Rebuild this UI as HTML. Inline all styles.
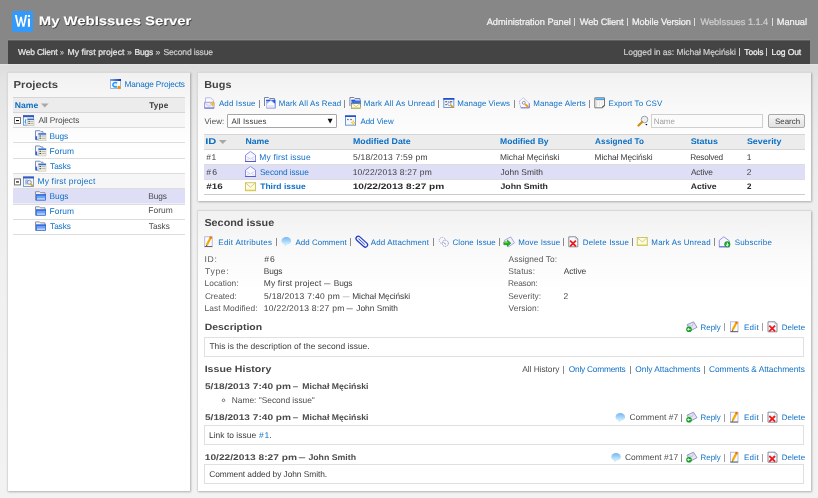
<!DOCTYPE html>
<html><head><meta charset="utf-8"><title>WebIssues</title>
<style>
html,body{margin:0;padding:0;width:818px;height:498px;overflow:hidden;background:#f0f0f0;font-family:"Liberation Sans",sans-serif}
svg text{font-family:"Liberation Sans",sans-serif;white-space:pre;text-rendering:geometricPrecision}
</style></head><body>
<div style="position:absolute;left:0;top:0;width:818px;height:64px;background:#878787"></div><div style="position:absolute;left:8px;top:40px;width:802px;height:24px;background:#444444;border-top:1px solid #606060;box-sizing:border-box;box-shadow:0 -1px 0 #8e8e8e"></div><div style="position:absolute;left:0;top:64px;width:818px;height:434px;background:linear-gradient(#e6e6e6 0px,#dedede 2px,#e4e4e4 20px,#ebebeb 80px,#f0f0f0 200px,#f2f2f2 400px)"></div><div style="position:absolute;left:7px;top:72px;width:183px;height:419px;background:linear-gradient(#f1f1f1 0px,#fafafa 40px,#ffffff 80px);box-shadow:1px 1px 2px rgba(0,0,0,0.28);border:1px solid #d9d9d9;border-right:none;border-bottom:none;box-sizing:border-box"></div><div style="position:absolute;left:197px;top:72px;width:614px;height:129px;background:linear-gradient(#f1f1f1 0px,#fafafa 40px,#ffffff 80px);box-shadow:1px 1px 2px rgba(0,0,0,0.28);border:1px solid #d9d9d9;border-right:none;border-bottom:none;box-sizing:border-box"></div><div style="position:absolute;left:197px;top:210px;width:614px;height:281px;background:linear-gradient(#f1f1f1 0px,#fafafa 40px,#ffffff 80px);box-shadow:1px 1px 2px rgba(0,0,0,0.28);border:1px solid #d9d9d9;border-right:none;border-bottom:none;box-sizing:border-box"></div><div style="position:absolute;left:12px;top:11px;width:21px;height:21px;background:#3399fa;border-radius:2px"></div><div style="position:absolute;left:227px;top:114px;width:110px;height:14px;background:#fff;border:1px solid #a6a6a6;border-radius:1px;box-sizing:border-box"></div><div style="position:absolute;left:651px;top:114px;width:112px;height:14px;background:#fbfbfb;border:1px solid #cfcfcf;box-sizing:border-box"></div><div style="position:absolute;left:768px;top:114px;width:37px;height:14px;background:linear-gradient(#f6f6f6,#e2e2e2);border:1px solid #a9a9a9;border-radius:2px;box-sizing:border-box"></div><div style="position:absolute;left:204px;top:337px;width:600px;height:20px;background:#fff;border:1px solid #e0e0e0;box-sizing:border-box"></div><div style="position:absolute;left:204px;top:425px;width:600px;height:20px;background:#fff;border:1px solid #e0e0e0;box-sizing:border-box"></div><div style="position:absolute;left:204px;top:464px;width:600px;height:20px;background:#fff;border:1px solid #e0e0e0;box-sizing:border-box"></div>
<svg width="818" height="498" viewBox="0 0 818 498" style="position:absolute;left:0;top:0;will-change:transform">
<defs><filter id="tsh" x="-5%" y="-30%" width="110%" height="160%"><feDropShadow dx="0.8" dy="0.8" stdDeviation="0.4" flood-color="#000" flood-opacity="0.6"/></filter></defs>
<path d="M14.8,15 L16.8,15 L18.6,24.2 L20.2,16.8 L21.8,16.8 L23.4,24.2 L25.1,15 L27.1,15 L24.4,26.8 L22.5,26.8 L21,19.9 L19.5,26.8 L17.5,26.8 Z" fill="#ffffff"/><rect x="27.9" y="18.6" width="2.1" height="8.2" fill="#fff"/><rect x="27.9" y="15" width="2.1" height="2" fill="#fff"/>
<g filter="url(#tsh)">
<text transform="translate(39.80,25.20) scale(1.1866,1)" x="-0.84" y="0" font-size="12.5" font-weight="bold" fill="#ffffff" textLength="128.53" lengthAdjust="spacing">My WebIssues Server</text>
</g>
<text transform="translate(486.70,24.90) scale(0.9975,1)" x="-0.02" y="0" font-size="9.3" fill="#f4f4f4" textLength="84.45" lengthAdjust="spacing" stroke="#f4f4f4" stroke-width="0.22">Administration Panel</text>
<rect x="574" y="18" width="1" height="8" fill="#dddddd"/>
<text transform="translate(579.90,24.90) scale(0.9921,1)" x="-0.04" y="0" font-size="9.3" fill="#f4f4f4" textLength="44.06" lengthAdjust="spacing" stroke="#f4f4f4" stroke-width="0.22">Web Client</text>
<rect x="627" y="18" width="1" height="8" fill="#dddddd"/>
<text transform="translate(632.80,24.90) scale(0.9910,1)" x="-0.76" y="0" font-size="9.3" fill="#f4f4f4" textLength="59.39" lengthAdjust="spacing" stroke="#f4f4f4" stroke-width="0.22">Mobile Version</text>
<rect x="694" y="18" width="1" height="8" fill="#dddddd"/>
<text transform="translate(700.50,24.90) scale(0.9957,1)" x="-0.04" y="0" font-size="9.3" fill="#cfcfcf" textLength="68.10" lengthAdjust="spacing" stroke="#cfcfcf" stroke-width="0.22">WebIssues 1.1.4</text>
<rect x="772" y="18" width="1" height="8" fill="#dddddd"/>
<text transform="translate(777.50,24.90) scale(0.9985,1)" x="-0.76" y="0" font-size="9.3" fill="#f4f4f4" textLength="30.33" lengthAdjust="spacing" stroke="#f4f4f4" stroke-width="0.22">Manual</text>
<text transform="translate(18.10,55.00) scale(0.9875,1)" x="-0.04" y="0" font-size="8.6" fill="#e8e8e8" textLength="40.00" lengthAdjust="spacing" stroke="#e8e8e8" stroke-width="0.22">Web Client</text>
<text transform="translate(60.40,55.00) scale(0.8077,1)" x="-0.35" y="0" font-size="8.6" fill="#bbbbbb" stroke="#bbbbbb" stroke-width="0.22">»</text>
<text transform="translate(68.10,55.00) scale(1.0042,1)" x="-0.71" y="0" font-size="8.6" fill="#e8e8e8" textLength="56.83" lengthAdjust="spacing" stroke="#e8e8e8" stroke-width="0.22">My first project</text>
<text transform="translate(127.30,55.00) scale(1.0279,1)" x="-0.35" y="0" font-size="8.6" fill="#bbbbbb" stroke="#bbbbbb" stroke-width="0.22">»</text>
<text transform="translate(135.20,55.00) scale(0.9914,1)" x="-0.71" y="0" font-size="8.6" fill="#e8e8e8" textLength="18.97" lengthAdjust="spacing" stroke="#e8e8e8" stroke-width="0.22">Bugs</text>
<text transform="translate(155.90,55.00) scale(1.0035,1)" x="-0.35" y="0" font-size="8.6" fill="#bbbbbb" stroke="#bbbbbb" stroke-width="0.22">»</text>
<text transform="translate(163.80,55.00) scale(0.9922,1)" x="-0.39" y="0" font-size="8.6" fill="#cccccc" textLength="50.06" lengthAdjust="spacing" stroke="#cccccc" stroke-width="0.22">Second issue</text>
<text transform="translate(624.20,55.00) scale(0.9960,1)" x="-0.71" y="0" font-size="8.6" fill="#cccccc" textLength="112.93" lengthAdjust="spacing" stroke="#cccccc" stroke-width="0.22">Logged in as: Michał Męciński</text>
<rect x="739" y="48" width="1" height="8" fill="#cccccc"/>
<text transform="translate(744.50,55.00) scale(0.9805,1)" x="-0.19" y="0" font-size="8.6" fill="#f4f4f4" textLength="19.47" lengthAdjust="spacing" stroke="#f4f4f4" stroke-width="0.22">Tools</text>
<rect x="766" y="48" width="1" height="8" fill="#cccccc"/>
<text transform="translate(772.30,55.00) scale(0.9930,1)" x="-0.71" y="0" font-size="8.6" fill="#f4f4f4" textLength="29.77" lengthAdjust="spacing" stroke="#f4f4f4" stroke-width="0.22">Log Out</text>
<text transform="translate(14.30,88.00) scale(1.1034,1)" x="-0.68" y="0" font-size="10.2" font-weight="bold" fill="#444444" textLength="40.25" lengthAdjust="spacing">Projects</text>
<text transform="translate(125.10,87.20) scale(0.9944,1)" x="-0.68" y="0" font-size="8.3" fill="#0f6fc6" textLength="60.92" lengthAdjust="spacing">Manage Projects</text>
<rect x="13" y="97" width="172" height="15" fill="#ececec"/>
<rect x="13" y="97" width="172" height="1" fill="#d5d5d5"/>
<rect x="13" y="112" width="172" height="1" fill="#d5d5d5"/>
<text transform="translate(15.40,107.90) scale(1.0509,1)" x="-0.55" y="0" font-size="8.2" font-weight="bold" fill="#0b6fc4" textLength="22.33" lengthAdjust="spacing">Name</text>
<path d="M41,103.5 L48.6,103.5 L44.8,107.5 Z" fill="#a8a8a8"/>
<text transform="translate(149.30,107.90) scale(0.9911,1)" x="-0.09" y="0" font-size="8.2" font-weight="bold" fill="#3a3a3a" textLength="19.14" lengthAdjust="spacing">Type</text>
<rect x="13" y="113" width="172" height="14.2" fill="#f6f6f6"/>
<rect x="13" y="173.9" width="172" height="14.5" fill="#f6f6f6"/>
<rect x="13" y="189" width="172" height="14.5" fill="#dedef6"/>
<rect x="13" y="127" width="172" height="1" fill="#dddddd"/>
<rect x="13" y="142" width="172" height="1" fill="#dddddd"/>
<rect x="13" y="158" width="172" height="1" fill="#dddddd"/>
<rect x="13" y="173" width="172" height="1" fill="#dddddd"/>
<rect x="13" y="188" width="172" height="1" fill="#dddddd"/>
<rect x="13" y="204" width="172" height="1" fill="#dddddd"/>
<rect x="13" y="219" width="172" height="1" fill="#dddddd"/>
<rect x="13" y="234" width="172" height="1" fill="#dddddd"/>
<text transform="translate(38.60,123.00) scale(0.9937,1)" x="-0.02" y="0" font-size="8.4" fill="#4a4a4a" textLength="40.98" lengthAdjust="spacing">All Projects</text>
<text transform="translate(50.30,138.70) scale(0.9938,1)" x="-0.69" y="0" font-size="8.4" fill="#0f6fc6" textLength="18.70" lengthAdjust="spacing">Bugs</text>
<text transform="translate(50.30,153.90) scale(1.0006,1)" x="-0.69" y="0" font-size="8.4" fill="#0f6fc6" textLength="24.33" lengthAdjust="spacing">Forum</text>
<text transform="translate(50.30,169.10) scale(0.9839,1)" x="-0.19" y="0" font-size="8.4" fill="#0f6fc6" textLength="21.02" lengthAdjust="spacing">Tasks</text>
<text transform="translate(38.10,184.00) scale(1.0121,1)" x="-0.69" y="0" font-size="8.4" fill="#0f6fc6" textLength="57.27" lengthAdjust="spacing">My first project</text>
<text transform="translate(50.30,199.00) scale(0.9961,1)" x="-0.69" y="0" font-size="8.4" fill="#0f6fc6" textLength="18.86" lengthAdjust="spacing">Bugs</text>
<text transform="translate(149.00,198.50) scale(0.9927,1)" x="-0.69" y="0" font-size="8.4" fill="#4a4a4a" textLength="18.62" lengthAdjust="spacing">Bugs</text>
<text transform="translate(50.30,213.90) scale(1.0006,1)" x="-0.69" y="0" font-size="8.4" fill="#0f6fc6" textLength="24.33" lengthAdjust="spacing">Forum</text>
<text transform="translate(149.00,213.40) scale(1.0024,1)" x="-0.69" y="0" font-size="8.4" fill="#4a4a4a" textLength="24.49" lengthAdjust="spacing">Forum</text>
<text transform="translate(50.30,229.00) scale(0.9839,1)" x="-0.19" y="0" font-size="8.4" fill="#0f6fc6" textLength="21.02" lengthAdjust="spacing">Tasks</text>
<text transform="translate(149.00,228.50) scale(0.9868,1)" x="-0.19" y="0" font-size="8.4" fill="#4a4a4a" textLength="21.27" lengthAdjust="spacing">Tasks</text>
<text transform="translate(205.00,88.00) scale(1.0656,1)" x="-0.68" y="0" font-size="10.2" font-weight="bold" fill="#444444" textLength="25.50" lengthAdjust="spacing">Bugs</text>
<text transform="translate(218.90,106.20) scale(1.0087,1)" x="-0.02" y="0" font-size="7.9" fill="#0f6fc6" textLength="36.35" lengthAdjust="spacing">Add Issue</text>
<rect x="259" y="100" width="1" height="8" fill="#8a8a8a"/>
<text transform="translate(279.40,106.20) scale(1.0047,1)" x="-0.65" y="0" font-size="7.9" fill="#0f6fc6" textLength="62.17" lengthAdjust="spacing">Mark All As Read</text>
<rect x="344" y="100" width="1" height="8" fill="#8a8a8a"/>
<text transform="translate(364.40,106.20) scale(1.0091,1)" x="-0.65" y="0" font-size="7.9" fill="#0f6fc6" textLength="70.52" lengthAdjust="spacing">Mark All As Unread</text>
<rect x="438" y="100" width="1" height="8" fill="#8a8a8a"/>
<text transform="translate(458.00,106.20) scale(1.0028,1)" x="-0.65" y="0" font-size="7.9" fill="#0f6fc6" textLength="52.39" lengthAdjust="spacing">Manage Views</text>
<rect x="514" y="100" width="1" height="8" fill="#8a8a8a"/>
<text transform="translate(533.80,106.20) scale(1.0067,1)" x="-0.65" y="0" font-size="7.9" fill="#0f6fc6" textLength="52.29" lengthAdjust="spacing">Manage Alerts</text>
<rect x="589" y="100" width="1" height="8" fill="#8a8a8a"/>
<text transform="translate(609.10,106.20) scale(1.0046,1)" x="-0.65" y="0" font-size="7.9" fill="#0f6fc6" textLength="53.64" lengthAdjust="spacing">Export To CSV</text>
<text transform="translate(204.60,123.70) scale(1.0047,1)" x="-0.03" y="0" font-size="7.9" fill="#4a4a4a" textLength="19.67" lengthAdjust="spacing">View:</text>
<text transform="translate(231.50,123.70) scale(1.0076,1)" x="-0.02" y="0" font-size="7.9" fill="#3a3a3a" textLength="34.84" lengthAdjust="spacing">All Issues</text>
<path d="M327.6,118.8 L332.6,118.8 L330.1,123.4 Z" fill="#111"/>
<text transform="translate(360.50,123.70) scale(0.9989,1)" x="-0.02" y="0" font-size="7.9" fill="#0f6fc6" textLength="33.23" lengthAdjust="spacing">Add View</text>
<text transform="translate(654.30,123.70) scale(0.9997,1)" x="-0.66" y="0" font-size="8.0" fill="#a0a0a0" textLength="21.32" lengthAdjust="spacing">Name</text>
<text transform="translate(775.30,123.70) scale(1.0020,1)" x="-0.36" y="0" font-size="7.9" fill="#3a3a3a" textLength="25.22" lengthAdjust="spacing">Search</text>
<rect x="204" y="134" width="601" height="15" fill="#ececec"/>
<rect x="204" y="134" width="601" height="1" fill="#d5d5d5"/>
<rect x="204" y="149" width="601" height="1" fill="#d5d5d5"/>
<text transform="translate(206.00,144.40) scale(1.3548,1)" x="-0.55" y="0" font-size="8.2" font-weight="bold" fill="#0b6fc4" textLength="8.20" lengthAdjust="spacing">ID</text>
<path d="M218.8,140 L226.7,140 L222.75,144 Z" fill="#a8a8a8"/>
<text transform="translate(246.00,144.40) scale(1.0602,1)" x="-0.55" y="0" font-size="8.2" font-weight="bold" fill="#0b6fc4" textLength="22.33" lengthAdjust="spacing">Name</text>
<text transform="translate(353.50,144.40) scale(1.0751,1)" x="-0.55" y="0" font-size="8.2" font-weight="bold" fill="#0b6fc4" textLength="53.76" lengthAdjust="spacing">Modified Date</text>
<text transform="translate(500.60,144.40) scale(1.0464,1)" x="-0.55" y="0" font-size="8.2" font-weight="bold" fill="#0b6fc4" textLength="46.47" lengthAdjust="spacing">Modified By</text>
<text transform="translate(595.30,144.40) scale(0.9943,1)" x="-0.20" y="0" font-size="8.2" font-weight="bold" fill="#0b6fc4" textLength="49.20" lengthAdjust="spacing">Assigned To</text>
<text transform="translate(690.90,144.40) scale(1.0903,1)" x="-0.24" y="0" font-size="8.2" font-weight="bold" fill="#0b6fc4" textLength="25.06" lengthAdjust="spacing">Status</text>
<text transform="translate(747.20,144.40) scale(1.0844,1)" x="-0.24" y="0" font-size="8.2" font-weight="bold" fill="#0b6fc4" textLength="31.91" lengthAdjust="spacing">Severity</text>
<rect x="204" y="165" width="601" height="14.5" fill="#dedef6"/>
<rect x="204" y="164" width="601" height="1" fill="#dddddd"/>
<rect x="204" y="179" width="601" height="1" fill="#dddddd"/>
<rect x="204" y="194" width="601" height="1" fill="#dddddd"/>
<rect x="204" y="194" width="601" height="1" fill="#cccccc"/>
<text transform="translate(206.40,160.20) scale(1.0132,1)" x="-0.04" y="0" font-size="8.4" fill="#3a3a3a" textLength="9.82" lengthAdjust="spacing">#1</text>
<text transform="translate(260.00,160.20) scale(1.0096,1)" x="-0.69" y="0" font-size="8.4" fill="#0f6fc6" textLength="50.88" lengthAdjust="spacing">My first issue</text>
<text transform="translate(353.30,160.20) scale(1.0131,1)" x="-0.34" y="0" font-size="8.4" fill="#3a3a3a" textLength="73.74" lengthAdjust="spacing">5/18/2013 7:59 pm</text>
<text transform="translate(500.60,160.20) scale(1.0009,1)" x="-0.69" y="0" font-size="8.4" fill="#3a3a3a" textLength="59.50" lengthAdjust="spacing">Michał Męciński</text>
<text transform="translate(595.30,160.20) scale(0.9957,1)" x="-0.69" y="0" font-size="8.4" fill="#3a3a3a" textLength="58.30" lengthAdjust="spacing">Michał Męciński</text>
<text transform="translate(690.90,160.20) scale(0.9879,1)" x="-0.69" y="0" font-size="8.4" fill="#3a3a3a" textLength="33.42" lengthAdjust="spacing">Resolved</text>
<text x="746.86" y="160.20" font-size="8.4" fill="#3a3a3a">1</text>
<text transform="translate(206.40,175.00) scale(1.0288,1)" x="-0.04" y="0" font-size="8.4" fill="#3a3a3a" textLength="10.42" lengthAdjust="spacing">#6</text>
<text transform="translate(260.30,175.00) scale(0.9936,1)" x="-0.38" y="0" font-size="8.4" fill="#0f6fc6" textLength="49.17" lengthAdjust="spacing">Second issue</text>
<text transform="translate(353.30,175.00) scale(1.0116,1)" x="-0.64" y="0" font-size="8.4" fill="#3a3a3a" textLength="78.20" lengthAdjust="spacing">10/22/2013 8:27 pm</text>
<text transform="translate(500.60,175.00) scale(1.0022,1)" x="-0.13" y="0" font-size="8.4" fill="#3a3a3a" textLength="42.39" lengthAdjust="spacing">John Smith</text>
<text transform="translate(690.90,175.00) scale(0.9929,1)" x="-0.02" y="0" font-size="8.4" fill="#3a3a3a" textLength="22.24" lengthAdjust="spacing">Active</text>
<text x="746.78" y="175.00" font-size="8.4" fill="#3a3a3a">2</text>
<text transform="translate(206.40,189.30) scale(1.2305,1)" x="-0.14" y="0" font-size="8.0" font-weight="bold" fill="#2a2a2a" textLength="13.35" lengthAdjust="spacing">#16</text>
<text transform="translate(260.30,189.30) scale(1.0659,1)" x="-0.09" y="0" font-size="8.0" font-weight="bold" fill="#0f6fc6" textLength="42.68" lengthAdjust="spacing">Third issue</text>
<text transform="translate(353.30,189.30) scale(1.2630,1)" x="-0.50" y="0" font-size="8.0" font-weight="bold" fill="#2a2a2a" textLength="72.50" lengthAdjust="spacing">10/22/2013 8:27 pm</text>
<text transform="translate(500.60,189.30) scale(1.0900,1)" x="-0.12" y="0" font-size="8.0" font-weight="bold" fill="#2a2a2a" textLength="43.55" lengthAdjust="spacing">John Smith</text>
<text transform="translate(690.90,189.30) scale(1.0748,1)" x="-0.20" y="0" font-size="8.0" font-weight="bold" fill="#2a2a2a" textLength="24.01" lengthAdjust="spacing">Active</text>
<text x="746.92" y="189.30" font-size="8.0" font-weight="bold" fill="#2a2a2a">2</text>
<text transform="translate(204.70,226.00) scale(1.0612,1)" x="-0.29" y="0" font-size="10.2" font-weight="bold" fill="#444444" textLength="65.76" lengthAdjust="spacing">Second issue</text>
<text transform="translate(219.00,245.00) scale(1.0182,1)" x="-0.65" y="0" font-size="7.9" fill="#0f6fc6" textLength="52.79" lengthAdjust="spacing">Edit Attributes</text>
<rect x="276" y="238" width="1" height="8" fill="#8a8a8a"/>
<text transform="translate(295.50,245.00) scale(1.0027,1)" x="-0.02" y="0" font-size="7.9" fill="#0f6fc6" textLength="51.04" lengthAdjust="spacing">Add Comment</text>
<rect x="350" y="238" width="1" height="8" fill="#8a8a8a"/>
<text transform="translate(370.80,245.00) scale(1.0066,1)" x="-0.02" y="0" font-size="7.9" fill="#0f6fc6" textLength="57.70" lengthAdjust="spacing">Add Attachment</text>
<rect x="433" y="238" width="1" height="8" fill="#8a8a8a"/>
<text transform="translate(452.90,245.00) scale(1.0074,1)" x="-0.40" y="0" font-size="7.9" fill="#0f6fc6" textLength="42.94" lengthAdjust="spacing">Clone Issue</text>
<rect x="499" y="238" width="1" height="8" fill="#8a8a8a"/>
<text transform="translate(518.90,245.00) scale(1.0080,1)" x="-0.65" y="0" font-size="7.9" fill="#0f6fc6" textLength="41.67" lengthAdjust="spacing">Move Issue</text>
<rect x="563" y="238" width="1" height="8" fill="#8a8a8a"/>
<text transform="translate(583.40,245.00) scale(1.0100,1)" x="-0.65" y="0" font-size="7.9" fill="#0f6fc6" textLength="45.65" lengthAdjust="spacing">Delete Issue</text>
<rect x="632" y="238" width="1" height="8" fill="#8a8a8a"/>
<text transform="translate(652.00,245.00) scale(1.0077,1)" x="-0.65" y="0" font-size="7.9" fill="#0f6fc6" textLength="58.81" lengthAdjust="spacing">Mark As Unread</text>
<rect x="714" y="238" width="1" height="8" fill="#8a8a8a"/>
<text transform="translate(735.00,245.00) scale(1.0124,1)" x="-0.36" y="0" font-size="7.9" fill="#0f6fc6" textLength="36.86" lengthAdjust="spacing">Subscribe</text>
<text transform="translate(205.30,261.80) scale(1.0328,1)" x="-0.78" y="0" font-size="8.4" fill="#585858" textLength="12.00" lengthAdjust="spacing">ID:</text>
<text transform="translate(205.30,273.70) scale(1.0233,1)" x="-0.19" y="0" font-size="8.4" fill="#585858" textLength="22.94" lengthAdjust="spacing">Type:</text>
<text transform="translate(205.30,286.00) scale(0.9992,1)" x="-0.69" y="0" font-size="8.4" fill="#585858" textLength="33.98" lengthAdjust="spacing">Location:</text>
<text transform="translate(205.30,298.80) scale(0.9973,1)" x="-0.43" y="0" font-size="8.4" fill="#585858" textLength="31.88" lengthAdjust="spacing">Created:</text>
<text transform="translate(205.30,310.70) scale(1.0026,1)" x="-0.69" y="0" font-size="8.4" fill="#585858" textLength="52.82" lengthAdjust="spacing">Last Modified:</text>
<text transform="translate(264.40,261.80) scale(1.0248,1)" x="-0.04" y="0" font-size="8.4" fill="#3a3a3a" textLength="10.26" lengthAdjust="spacing">#6</text>
<text transform="translate(264.40,273.70) scale(0.9950,1)" x="-0.69" y="0" font-size="8.4" fill="#3a3a3a" textLength="18.78" lengthAdjust="spacing">Bugs</text>
<text transform="translate(264.40,286.00) scale(1.0107,1)" x="-0.69" y="0" font-size="8.4" fill="#3a3a3a" textLength="56.95" lengthAdjust="spacing">My first project</text>
<text transform="translate(324.10,286.00) scale(0.7619,1)" x="-0.00" y="0" font-size="8.4" fill="#3a3a3a">—</text>
<text transform="translate(334.50,286.00) scale(0.9938,1)" x="-0.69" y="0" font-size="8.4" fill="#3a3a3a" textLength="18.70" lengthAdjust="spacing">Bugs</text>
<text transform="translate(264.40,298.80) scale(1.0158,1)" x="-0.34" y="0" font-size="8.4" fill="#3a3a3a" textLength="74.53" lengthAdjust="spacing">5/18/2013 7:40 pm</text>
<text transform="translate(342.70,298.80) scale(0.8095,1)" x="-0.00" y="0" font-size="8.4" fill="#9a9a9a">—</text>
<text transform="translate(352.90,298.80) scale(0.9954,1)" x="-0.69" y="0" font-size="8.4" fill="#3a3a3a" textLength="58.22" lengthAdjust="spacing">Michał Męciński</text>
<text transform="translate(264.40,310.70) scale(1.0152,1)" x="-0.64" y="0" font-size="8.4" fill="#3a3a3a" textLength="79.31" lengthAdjust="spacing">10/22/2013 8:27 pm</text>
<text transform="translate(346.60,310.70) scale(0.7500,1)" x="-0.00" y="0" font-size="8.4" fill="#3a3a3a">—</text>
<text transform="translate(356.40,310.70) scale(0.9988,1)" x="-0.13" y="0" font-size="8.4" fill="#3a3a3a" textLength="41.83" lengthAdjust="spacing">John Smith</text>
<text transform="translate(508.60,261.80) scale(0.9973,1)" x="-0.02" y="0" font-size="8.4" fill="#585858" textLength="48.51" lengthAdjust="spacing">Assigned To:</text>
<text transform="translate(508.60,273.70) scale(1.0048,1)" x="-0.38" y="0" font-size="8.4" fill="#585858" textLength="26.63" lengthAdjust="spacing">Status:</text>
<text transform="translate(508.60,286.00) scale(0.9895,1)" x="-0.69" y="0" font-size="8.4" fill="#585858" textLength="30.06" lengthAdjust="spacing">Reason:</text>
<text transform="translate(508.60,298.80) scale(1.0017,1)" x="-0.38" y="0" font-size="8.4" fill="#585858" textLength="32.89" lengthAdjust="spacing">Severity:</text>
<text transform="translate(508.60,310.70) scale(0.9979,1)" x="-0.04" y="0" font-size="8.4" fill="#585858" textLength="30.57" lengthAdjust="spacing">Version:</text>
<text transform="translate(563.80,273.70) scale(0.9957,1)" x="-0.02" y="0" font-size="8.4" fill="#3a3a3a" textLength="22.49" lengthAdjust="spacing">Active</text>
<text x="563.38" y="298.80" font-size="8.4" fill="#3a3a3a">2</text>
<text transform="translate(205.40,329.80) scale(1.1351,1)" x="-0.62" y="0" font-size="9.2" font-weight="bold" fill="#444444" textLength="50.61" lengthAdjust="spacing">Description</text>
<text transform="translate(701.20,329.80) scale(1.0007,1)" x="-0.65" y="0" font-size="7.9" fill="#0f6fc6" textLength="20.25" lengthAdjust="spacing">Reply</text>
<rect x="724" y="323" width="1" height="8" fill="#a0a0a0"/>
<text transform="translate(744.60,329.80) scale(1.0164,1)" x="-0.65" y="0" font-size="7.9" fill="#0f6fc6" textLength="14.48" lengthAdjust="spacing">Edit</text>
<rect x="762" y="323" width="1" height="8" fill="#a0a0a0"/>
<text transform="translate(782.30,329.80) scale(1.0051,1)" x="-0.65" y="0" font-size="7.9" fill="#0f6fc6" textLength="23.29" lengthAdjust="spacing">Delete</text>
<text transform="translate(209.60,349.00) scale(1.0025,1)" x="-0.19" y="0" font-size="8.4" fill="#3a3a3a" textLength="159.86" lengthAdjust="spacing">This is the description of the second issue.</text>
<text transform="translate(205.40,372.30) scale(1.1538,1)" x="-0.62" y="0" font-size="9.2" font-weight="bold" fill="#444444" textLength="57.78" lengthAdjust="spacing">Issue History</text>
<text transform="translate(522.20,372.20) scale(0.9970,1)" x="-0.02" y="0" font-size="8.4" fill="#4a4a4a" textLength="37.35" lengthAdjust="spacing">All History</text>
<rect x="563" y="366" width="1" height="8" fill="#8a8a8a"/>
<text transform="translate(569.20,372.20) scale(0.9886,1)" x="-0.40" y="0" font-size="8.4" fill="#0f6fc6" textLength="57.55" lengthAdjust="spacing">Only Comments</text>
<rect x="630" y="366" width="1" height="8" fill="#8a8a8a"/>
<text transform="translate(635.70,372.20) scale(0.9960,1)" x="-0.40" y="0" font-size="8.4" fill="#0f6fc6" textLength="65.26" lengthAdjust="spacing">Only Attachments</text>
<rect x="704" y="366" width="1" height="8" fill="#8a8a8a"/>
<text transform="translate(709.40,372.20) scale(0.9964,1)" x="-0.43" y="0" font-size="8.4" fill="#0f6fc6" textLength="96.18" lengthAdjust="spacing">Comments &amp; Attachments</text>
<text transform="translate(205.30,389.10) scale(1.2336,1)" x="-0.25" y="0" font-size="8.2" font-weight="bold" fill="#4a4a4a" textLength="69.75" lengthAdjust="spacing">5/18/2013 7:40 pm</text>
<text transform="translate(293.00,389.10) scale(0.5976,1)" x="-0.00" y="0" font-size="8.2" font-weight="bold" fill="#4a4a4a">—</text>
<text transform="translate(302.90,389.10) scale(1.0603,1)" x="-0.55" y="0" font-size="8.2" font-weight="bold" fill="#4a4a4a" textLength="62.43" lengthAdjust="spacing">Michał Męciński</text>
<circle cx="223.5" cy="400.3" r="1.3" fill="none" stroke="#555" stroke-width="0.8"/>
<text transform="translate(232.50,402.90) scale(0.9990,1)" x="-0.69" y="0" font-size="8.4" fill="#4a4a4a" textLength="83.13" lengthAdjust="spacing">Name: &quot;Second issue&quot;</text>
<text transform="translate(205.30,419.90) scale(1.2336,1)" x="-0.25" y="0" font-size="8.2" font-weight="bold" fill="#4a4a4a" textLength="69.75" lengthAdjust="spacing">5/18/2013 7:40 pm</text>
<text transform="translate(293.00,419.90) scale(0.5976,1)" x="-0.00" y="0" font-size="8.2" font-weight="bold" fill="#4a4a4a">—</text>
<text transform="translate(302.90,419.90) scale(1.0603,1)" x="-0.55" y="0" font-size="8.2" font-weight="bold" fill="#4a4a4a" textLength="62.43" lengthAdjust="spacing">Michał Męciński</text>
<text transform="translate(629.80,420.20) scale(1.0032,1)" x="-0.43" y="0" font-size="8.4" fill="#4a4a4a" textLength="48.70" lengthAdjust="spacing">Comment #7</text>
<rect x="681" y="414" width="1" height="8" fill="#8a8a8a"/>
<text transform="translate(701.20,420.20) scale(1.0007,1)" x="-0.65" y="0" font-size="7.9" fill="#0f6fc6" textLength="20.25" lengthAdjust="spacing">Reply</text>
<rect x="724" y="414" width="1" height="8" fill="#a0a0a0"/>
<text transform="translate(744.60,420.20) scale(1.0164,1)" x="-0.65" y="0" font-size="7.9" fill="#0f6fc6" textLength="14.48" lengthAdjust="spacing">Edit</text>
<rect x="762" y="414" width="1" height="8" fill="#a0a0a0"/>
<text transform="translate(782.30,420.20) scale(1.0051,1)" x="-0.65" y="0" font-size="7.9" fill="#0f6fc6" textLength="23.29" lengthAdjust="spacing">Delete</text>
<text transform="translate(209.60,437.80) scale(1.0025,1)" x="-0.69" y="0" font-size="8.4" fill="#3a3a3a" textLength="47.15" lengthAdjust="spacing">Link to issue</text>
<text transform="translate(259.00,437.80) scale(1.0216,1)" x="-0.04" y="0" font-size="8.4" fill="#0f6fc6" textLength="10.14" lengthAdjust="spacing">#1</text>
<text x="269.33" y="437.80" font-size="8.4" fill="#3a3a3a">.</text>
<text transform="translate(205.40,460.00) scale(1.2418,1)" x="-0.52" y="0" font-size="8.2" font-weight="bold" fill="#4a4a4a" textLength="74.31" lengthAdjust="spacing">10/22/2013 8:27 pm</text>
<text transform="translate(298.70,460.00) scale(0.7927,1)" x="-0.00" y="0" font-size="8.2" font-weight="bold" fill="#4a4a4a">—</text>
<text transform="translate(308.50,460.00) scale(1.0679,1)" x="-0.12" y="0" font-size="8.2" font-weight="bold" fill="#4a4a4a" textLength="44.64" lengthAdjust="spacing">John Smith</text>
<text transform="translate(625.30,460.20) scale(1.0023,1)" x="-0.43" y="0" font-size="8.4" fill="#4a4a4a" textLength="53.23" lengthAdjust="spacing">Comment #17</text>
<rect x="681" y="454" width="1" height="8" fill="#8a8a8a"/>
<text transform="translate(701.20,460.20) scale(1.0007,1)" x="-0.65" y="0" font-size="7.9" fill="#0f6fc6" textLength="20.25" lengthAdjust="spacing">Reply</text>
<rect x="724" y="454" width="1" height="8" fill="#a0a0a0"/>
<text transform="translate(744.60,460.20) scale(1.0164,1)" x="-0.65" y="0" font-size="7.9" fill="#0f6fc6" textLength="14.48" lengthAdjust="spacing">Edit</text>
<rect x="762" y="454" width="1" height="8" fill="#a0a0a0"/>
<text transform="translate(782.30,460.20) scale(1.0051,1)" x="-0.65" y="0" font-size="7.9" fill="#0f6fc6" textLength="23.29" lengthAdjust="spacing">Delete</text>
<text transform="translate(209.60,476.80) scale(0.9966,1)" x="-0.43" y="0" font-size="8.4" fill="#3a3a3a" textLength="118.39" lengthAdjust="spacing">Comment added by John Smith.</text>
<g transform="translate(110,79) scale(1.0)"><defs><linearGradient id="tb1" x1="0" y1="0" x2="1" y2="0"><stop offset="0" stop-color="#7eaee2"/><stop offset="1" stop-color="#1830a8"/></linearGradient></defs><rect x="0.5" y="0.5" width="10" height="9" fill="#f8fbff" stroke="#a6b6d0" stroke-width="1"/><rect x="0" y="0" width="11" height="2" fill="url(#tb1)"/><circle cx="5.2" cy="5.6" r="1.9" fill="#e4eef8"/><path d="M7,4.3 A2.3,2.3 0 1 0 6.8,7.4" fill="none" stroke="#1e96f2" stroke-width="1.5"/><circle cx="9" cy="8.4" r="1.6" fill="#f29200"/></g>
<rect x="14.5" y="117.5" width="6" height="6" fill="#fff" stroke="#777" stroke-width="1"/><rect x="16" y="120" width="3" height="1.1" fill="#000"/>
<rect x="14.5" y="178.9" width="6" height="6" fill="#fff" stroke="#777" stroke-width="1"/><rect x="16" y="181.4" width="3" height="1.1" fill="#000"/>
<g transform="translate(23,115.2) scale(1.0)"><rect x="0.5" y="0.5" width="10" height="9.5" fill="#f6f9fd" stroke="#7f9fd0" stroke-width="1"/><rect x="0" y="0" width="11" height="2" fill="#3458c0"/><path d="M3,4 Q1.5,6.5 3,8.5" fill="none" stroke="#2f9af5" stroke-width="1.2"/><rect x="4.5" y="3.5" width="6.5" height="7" fill="#ececdf" stroke="#c9c9b8" stroke-width="0.6"/><rect x="4.5" y="3.5" width="6.5" height="1.3" fill="#2f6fd8"/><rect x="5.5" y="5.7" width="1.2" height="1" fill="#333"/><rect x="7.2" y="5.9" width="3.3" height="0.6" fill="#999"/><rect x="5.5" y="7.7" width="1.2" height="1" fill="#333"/><rect x="7.2" y="7.9" width="3.3" height="0.6" fill="#999"/></g>
<g transform="translate(23,176.5) scale(1.0)"><rect x="0.5" y="0.5" width="10" height="9.5" fill="#f4f8fc" stroke="#7f9fd0" stroke-width="1"/><rect x="0" y="0" width="11" height="2" fill="#3458c0"/><rect x="2" y="3" width="3" height="5" fill="#a9c2e6"/><circle cx="6.3" cy="5.8" r="2" fill="#e8eef4" stroke="#7a8aa0" stroke-width="0.9"/><path d="M7.7,7.4 L10,9.8" stroke="#f09a00" stroke-width="1.6"/></g>
<g transform="translate(35,130.2) scale(1.0)"><path d="M0.5,0.5 H5 L6,1.5 H8 V9.5 H0.5 Z" fill="#f2f5fb" stroke="#7d8fc0" stroke-width="1"/><rect x="0.6" y="6" width="1.5" height="3.5" fill="#2a5fe0"/><rect x="3.5" y="3" width="7.5" height="7.5" fill="#ebebe0" stroke="#c8c8b8" stroke-width="0.6"/><rect x="3.5" y="3" width="7.5" height="1.5" fill="#2f6fd8"/><rect x="4.5" y="5.3" width="1.4" height="1" fill="#333"/><rect x="6.5" y="5.5" width="4" height="0.6" fill="#999"/><rect x="4.5" y="7.5" width="1.4" height="1" fill="#333"/><rect x="6.5" y="7.7" width="4" height="0.6" fill="#999"/></g>
<g transform="translate(35,145.5) scale(1.0)"><path d="M0.5,0.5 H5 L6,1.5 H8 V9.5 H0.5 Z" fill="#f2f5fb" stroke="#7d8fc0" stroke-width="1"/><rect x="0.6" y="6" width="1.5" height="3.5" fill="#2a5fe0"/><rect x="3.5" y="3" width="7.5" height="7.5" fill="#ebebe0" stroke="#c8c8b8" stroke-width="0.6"/><rect x="3.5" y="3" width="7.5" height="1.5" fill="#2f6fd8"/><rect x="4.5" y="5.3" width="1.4" height="1" fill="#333"/><rect x="6.5" y="5.5" width="4" height="0.6" fill="#999"/><rect x="4.5" y="7.5" width="1.4" height="1" fill="#333"/><rect x="6.5" y="7.7" width="4" height="0.6" fill="#999"/></g>
<g transform="translate(35,160.7) scale(1.0)"><path d="M0.5,0.5 H5 L6,1.5 H8 V9.5 H0.5 Z" fill="#f2f5fb" stroke="#7d8fc0" stroke-width="1"/><rect x="0.6" y="6" width="1.5" height="3.5" fill="#2a5fe0"/><rect x="3.5" y="3" width="7.5" height="7.5" fill="#ebebe0" stroke="#c8c8b8" stroke-width="0.6"/><rect x="3.5" y="3" width="7.5" height="1.5" fill="#2f6fd8"/><rect x="4.5" y="5.3" width="1.4" height="1" fill="#333"/><rect x="6.5" y="5.5" width="4" height="0.6" fill="#999"/><rect x="4.5" y="7.5" width="1.4" height="1" fill="#333"/><rect x="6.5" y="7.7" width="4" height="0.6" fill="#999"/></g>
<g transform="translate(35,191.20000000000002) scale(1.0)"><path d="M0.5,0.5 H4.5 L5.5,1.5 H10 V9 H0.5 Z" fill="#f4f4f4" stroke="#8a90a0" stroke-width="1"/><path d="M1,3.2 H11 V9.3 H1 Z" fill="#3f7ee8"/><rect x="2" y="4.3" width="8" height="3.5" fill="#6ea2f2"/><rect x="2" y="7.3" width="8" height="1" fill="#f4f8ff"/><rect x="1" y="3.2" width="10" height="0.9" fill="#1f4fd0"/></g>
<g transform="translate(35,206.3) scale(1.0)"><path d="M0.5,0.5 H4.5 L5.5,1.5 H10 V9 H0.5 Z" fill="#f4f4f4" stroke="#8a90a0" stroke-width="1"/><path d="M1,3.2 H11 V9.3 H1 Z" fill="#3f7ee8"/><rect x="2" y="4.3" width="8" height="3.5" fill="#6ea2f2"/><rect x="2" y="7.3" width="8" height="1" fill="#f4f8ff"/><rect x="1" y="3.2" width="10" height="0.9" fill="#1f4fd0"/></g>
<g transform="translate(35,221.4) scale(1.0)"><path d="M0.5,0.5 H4.5 L5.5,1.5 H10 V9 H0.5 Z" fill="#f4f4f4" stroke="#8a90a0" stroke-width="1"/><path d="M1,3.2 H11 V9.3 H1 Z" fill="#3f7ee8"/><rect x="2" y="4.3" width="8" height="3.5" fill="#6ea2f2"/><rect x="2" y="7.3" width="8" height="1" fill="#f4f8ff"/><rect x="1" y="3.2" width="10" height="0.9" fill="#1f4fd0"/></g>
<g transform="translate(204,97.3) scale(1.0)"><path d="M1.5,0.5 H6.5 L9.5,3 V6 H1.5 Z" fill="#fafaff" stroke="#b8bce8" stroke-width="1"/><path d="M0.5,5 H10 V11 H0.5 Z" fill="#ececfb" stroke="#a0a0e0" stroke-width="1"/><path d="M1,6 L5,9 L9,6" fill="none" stroke="#c0c0ea" stroke-width="0.8"/><rect x="0.5" y="10.2" width="9.5" height="1" fill="#7070d0"/><path d="M8.5,3.8 L9.5,5.6 L11.3,6.5 L9.5,7.4 L8.5,9.2 L7.5,7.4 L5.7,6.5 L7.5,5.6 Z" fill="#f6c020"/></g>
<g transform="translate(264,97) scale(1.0)"><defs><linearGradient id="fg1" x1="0" y1="0" x2="1" y2="0"><stop offset="0" stop-color="#9cc0f4"/><stop offset="1" stop-color="#1f50e0"/></linearGradient></defs><path d="M0.5,9 V0.5 H4.5 L5.5,1.5 H10.5 V3" fill="#fbfbfb" stroke="#7882a8" stroke-width="1"/><rect x="2" y="2.8" width="9.5" height="8.5" fill="url(#fg1)"/><rect x="2" y="2.8" width="5" height="1" fill="#1a48d8"/><path d="M2.8,11.2 V6.8 L6.8,3.5 L10.8,6.8 V11.2 Z" fill="#fcfcff" stroke="#c0c0ee" stroke-width="0.6"/><path d="M4,9 H9.5" stroke="#c8c8e8" stroke-width="0.8"/><rect x="2.5" y="10.6" width="8.8" height="0.9" fill="#a8a8e6"/></g>
<g transform="translate(349.4,97) scale(1.0)"><path d="M0.5,9 V0.5 H4.5 L5.5,1.5 H10.5 V3" fill="#fbfbfb" stroke="#7882a8" stroke-width="1"/><rect x="2" y="2.8" width="9.5" height="4.2" fill="#3a70e6"/><rect x="2" y="2.8" width="3.5" height="0.9" fill="#1a48d8"/><rect x="6" y="2.8" width="5" height="0.9" fill="#a8c8f8"/><rect x="2.2" y="6.5" width="9" height="4.8" fill="#fcfcf0" stroke="#5a6a40" stroke-width="0.6"/><path d="M3,7 L6.7,9.6 L10.5,7" fill="none" stroke="#c8c070" stroke-width="0.8"/><rect x="2.2" y="10.2" width="9" height="1.2" fill="#e0d850"/></g>
<g transform="translate(443.3,98) scale(1.0)"><rect x="0.5" y="0.5" width="10" height="9" fill="#f6f9fd" stroke="#6d98dc" stroke-width="1"/><rect x="0" y="0" width="11" height="1.8" fill="#2050d0"/><rect x="2" y="3" width="1.6" height="1.4" fill="#666"/><rect x="4.3" y="3.2" width="1.5" height="1" fill="#999"/><rect x="6.5" y="3" width="2.5" height="1.4" fill="#777"/><rect x="2" y="6" width="1.6" height="1.2" fill="#666"/><circle cx="6" cy="6" r="1.6" fill="none" stroke="#8090b0" stroke-width="0.8"/><path d="M7.3,7.2 L10,9.6" stroke="#f09a00" stroke-width="1.8"/></g>
<g transform="translate(518.8,97.3) scale(1.0)"><path d="M0.5,4 L4.5,0.5 L10.5,6 V10.5 H2 Z" fill="#fafaff" stroke="#9a9ae0" stroke-width="0.9" stroke-dasharray="1,0.6"/><path d="M2,10.5 H10.5 V6" fill="none" stroke="#7a7ad8" stroke-width="1"/><circle cx="5" cy="5.5" r="1.5" fill="none" stroke="#7a8090" stroke-width="0.8"/><path d="M6.5,7 L9.5,9.8" stroke="#f09a00" stroke-width="1.9"/></g>
<g transform="translate(594,97.3) scale(1.0)"><path d="M0.8,0.5 H10.5 V8.5 L8.5,10.5 H0.8 Z" fill="#fbfbfb" stroke="#777" stroke-width="1"/><rect x="1.5" y="1.2" width="8.5" height="1.4" fill="#1aa0f8"/><rect x="1.5" y="3" width="8.5" height="0.5" fill="#f0c8a0"/><path d="M3,4 V9 M5.5,4 V9 M8,4 V8" stroke="#ddd" stroke-width="0.7"/><rect x="1.5" y="4" width="1.2" height="5.5" fill="#d8d8d8"/><path d="M8,10 L10.5,8" stroke="#333" stroke-width="1"/></g>
<g transform="translate(345,115.4) scale(1.0)"><rect x="0.5" y="0.5" width="10" height="9.3" fill="#f4f7fb" stroke="#6d98dc" stroke-width="1"/><rect x="0" y="0" width="11" height="1.6" fill="#2050d0"/><rect x="2" y="3.5" width="1.7" height="1.2" fill="#777"/><rect x="5" y="3.5" width="2" height="1.2" fill="#888"/><path d="M8.3,4.5 L9.1,6.6 L11,7.4 L9.1,8.2 L8.3,10.3 L7.5,8.2 L5.6,7.4 L7.5,6.6 Z" fill="#f2b400"/><circle cx="8.3" cy="7.4" r="1" fill="#fff080"/></g>
<g transform="translate(637.5,115.5) scale(1.0)"><circle cx="7" cy="4" r="3.3" fill="#e8f0f2" stroke="#9aa0a8" stroke-width="1"/><path d="M4.6,6.5 L1,10" stroke="#d88a10" stroke-width="2.2" stroke-linecap="round"/><path d="M7.8,8.6 L10,8.6 L8.9,10 Z" fill="#000"/></g>
<g transform="translate(245,151) scale(1.0)"><path d="M0.5,4 L5.5,0.5 L10.5,4 V10.5 H0.5 Z" fill="#f7f7ff" stroke="#8e8ee0" stroke-width="1"/><path d="M1.5,5.5 L5.5,8 L9.5,5.5 M1.5,9.5 L4.5,7.3 M9.5,9.5 L6.5,7.3" fill="none" stroke="#c8c8ee" stroke-width="0.8"/><rect x="0" y="10" width="11" height="1" fill="#5a5ad0"/></g>
<g transform="translate(245,166) scale(1.0)"><path d="M0.5,4 L5.5,0.5 L10.5,4 V10.5 H0.5 Z" fill="#f7f7ff" stroke="#8e8ee0" stroke-width="1"/><path d="M1.5,5.5 L5.5,8 L9.5,5.5 M1.5,9.5 L4.5,7.3 M9.5,9.5 L6.5,7.3" fill="none" stroke="#c8c8ee" stroke-width="0.8"/><rect x="0" y="10" width="11" height="1" fill="#5a5ad0"/></g>
<g transform="translate(245,182.2) scale(1.0)"><rect x="0.5" y="0.5" width="10" height="8" fill="#fdfbe2" stroke="#cfc660" stroke-width="1"/><path d="M1,1 L5.5,5 L10,1" fill="none" stroke="#c9c070" stroke-width="0.8"/><rect x="0.5" y="7.5" width="10" height="1.2" fill="#d8d050"/></g>
<g transform="translate(204.2,236.2) scale(1.0)"><rect x="0.5" y="0.5" width="7.5" height="10" fill="#fbfbff" stroke="#b0b4d8" stroke-width="0.9"/><rect x="0.5" y="9.8" width="7.5" height="1" fill="#666"/><path d="M6.8,0.8 L2.6,8.8" stroke="#f6a800" stroke-width="2.2"/><path d="M7,0.6 L6.1,2.3" stroke="#f07000" stroke-width="2.2"/><path d="M2.6,8.8 L2.2,10" stroke="#555" stroke-width="1"/></g>
<g transform="translate(281.5,237) scale(1.0)"><defs><linearGradient id="bg1" x1="0" y1="0" x2="0" y2="1"><stop offset="0" stop-color="#78b4f4"/><stop offset="1" stop-color="#d4f4ff"/></linearGradient></defs><ellipse cx="4.8" cy="4" rx="4.8" ry="3.9" fill="url(#bg1)"/><path d="M3,7 L3.5,9 L5,7.5 Z" fill="#b0e0fa"/></g>
<g transform="translate(355.8,236.2) scale(1.0)"><g transform="translate(6,5.5) rotate(42)"><rect x="-7" y="-2.3" width="14" height="4.6" rx="2.3" fill="#eef0ff" stroke="#2438c0" stroke-width="1.2"/><path d="M-4.5,0 H4" stroke="#3a50d8" stroke-width="0.9"/></g></g>
<g transform="translate(438.5,236.5) scale(1.0)"><circle cx="3.8" cy="4" r="3.1" fill="none" stroke="#a8a8d8" stroke-width="1" stroke-dasharray="1.3,0.7"/><circle cx="6.8" cy="6.8" r="3.1" fill="#f8f8ff" stroke="#9090c8" stroke-width="1" stroke-dasharray="1.3,0.7"/><path d="M5,6 L7.5,7.8" stroke="#8080c0" stroke-width="0.8"/></g>
<g transform="translate(503.3,236.4) scale(1.0)"><path d="M1,4 L7.5,0.5 L11.2,6.5 L5,10.5 Z" fill="#f0f0fc" stroke="#a0a0d8" stroke-width="0.9"/><path d="M0.5,5.5 H4 V3.5 L7.6,6.8 L4,10 V8.3 H0.5 Z" fill="#20b020" stroke="#108010" stroke-width="0.5"/><path d="M1,6 H4.5" stroke="#a0f060" stroke-width="0.8"/></g>
<g transform="translate(568.3,236.3) scale(1.0)"><path d="M0.5,0.5 H7.5 L9.5,2.5 V10.5 H0.5 Z" fill="#f8fcff" stroke="#7a8090" stroke-width="0.9"/><path d="M7.5,0.5 V2.5 H9.5" fill="none" stroke="#9aa0b0" stroke-width="0.7"/><path d="M1.8,4.3 L7.6,10 M7.6,4.3 L1.8,10" stroke="#ee1a1a" stroke-width="1.8"/></g>
<g transform="translate(636.8,237) scale(1.0)"><rect x="0.5" y="0.5" width="10" height="8" fill="#fdfbe2" stroke="#cfc660" stroke-width="1"/><path d="M1,1 L5.5,5 L10,1" fill="none" stroke="#c9c070" stroke-width="0.8"/><rect x="0.5" y="7.5" width="10" height="1.2" fill="#d8d050"/></g>
<g transform="translate(718.8,236.3) scale(1.0)"><path d="M0.5,4 L5,0.5 L10.5,4.5 V10.5 H0.5 Z" fill="#f6f6ff" stroke="#8a8ae0" stroke-width="0.9"/><rect x="0.3" y="10" width="10.5" height="1" fill="#6a6ad8"/><circle cx="8.5" cy="8" r="3" fill="#12a020"/><path d="M8.5,6.3 V9.5 M7,8.3 L8.5,9.7 L10,8.3" stroke="#fff" stroke-width="1" fill="none"/></g>
<g transform="translate(686,321.3) scale(1.0)"><path d="M1,3.5 L7.5,0.5 L11,6 L4.5,9.5 Z" fill="#e4e4f2" stroke="#8c8cc0" stroke-width="0.9"/><path d="M1.5,4 L6.5,4.8 L7.5,1" fill="none" stroke="#b8b8dc" stroke-width="0.7"/><circle cx="3" cy="8" r="2.8" fill="#12a020"/><path d="M1.6,8 H4.6 M2.8,6.9 L1.6,8 L2.8,9.1" stroke="#fff" stroke-width="0.9" fill="none"/></g>
<g transform="translate(730,321.3) scale(1.0)"><rect x="0.5" y="0.5" width="7.5" height="10" fill="#fbfbff" stroke="#b0b4d8" stroke-width="0.9"/><rect x="0.5" y="9.8" width="7.5" height="1" fill="#666"/><path d="M6.8,0.8 L2.6,8.8" stroke="#f6a800" stroke-width="2.2"/><path d="M7,0.6 L6.1,2.3" stroke="#f07000" stroke-width="2.2"/><path d="M2.6,8.8 L2.2,10" stroke="#555" stroke-width="1"/></g>
<g transform="translate(767.5,321.3) scale(1.0)"><path d="M0.5,0.5 H7.5 L9.5,2.5 V10.5 H0.5 Z" fill="#f8fcff" stroke="#7a8090" stroke-width="0.9"/><path d="M7.5,0.5 V2.5 H9.5" fill="none" stroke="#9aa0b0" stroke-width="0.7"/><path d="M1.8,4.3 L7.6,10 M7.6,4.3 L1.8,10" stroke="#ee1a1a" stroke-width="1.8"/></g>
<g transform="translate(686,411.7) scale(1.0)"><path d="M1,3.5 L7.5,0.5 L11,6 L4.5,9.5 Z" fill="#e4e4f2" stroke="#8c8cc0" stroke-width="0.9"/><path d="M1.5,4 L6.5,4.8 L7.5,1" fill="none" stroke="#b8b8dc" stroke-width="0.7"/><circle cx="3" cy="8" r="2.8" fill="#12a020"/><path d="M1.6,8 H4.6 M2.8,6.9 L1.6,8 L2.8,9.1" stroke="#fff" stroke-width="0.9" fill="none"/></g>
<g transform="translate(730,411.7) scale(1.0)"><rect x="0.5" y="0.5" width="7.5" height="10" fill="#fbfbff" stroke="#b0b4d8" stroke-width="0.9"/><rect x="0.5" y="9.8" width="7.5" height="1" fill="#666"/><path d="M6.8,0.8 L2.6,8.8" stroke="#f6a800" stroke-width="2.2"/><path d="M7,0.6 L6.1,2.3" stroke="#f07000" stroke-width="2.2"/><path d="M2.6,8.8 L2.2,10" stroke="#555" stroke-width="1"/></g>
<g transform="translate(767.5,411.7) scale(1.0)"><path d="M0.5,0.5 H7.5 L9.5,2.5 V10.5 H0.5 Z" fill="#f8fcff" stroke="#7a8090" stroke-width="0.9"/><path d="M7.5,0.5 V2.5 H9.5" fill="none" stroke="#9aa0b0" stroke-width="0.7"/><path d="M1.8,4.3 L7.6,10 M7.6,4.3 L1.8,10" stroke="#ee1a1a" stroke-width="1.8"/></g>
<g transform="translate(686,451.7) scale(1.0)"><path d="M1,3.5 L7.5,0.5 L11,6 L4.5,9.5 Z" fill="#e4e4f2" stroke="#8c8cc0" stroke-width="0.9"/><path d="M1.5,4 L6.5,4.8 L7.5,1" fill="none" stroke="#b8b8dc" stroke-width="0.7"/><circle cx="3" cy="8" r="2.8" fill="#12a020"/><path d="M1.6,8 H4.6 M2.8,6.9 L1.6,8 L2.8,9.1" stroke="#fff" stroke-width="0.9" fill="none"/></g>
<g transform="translate(730,451.7) scale(1.0)"><rect x="0.5" y="0.5" width="7.5" height="10" fill="#fbfbff" stroke="#b0b4d8" stroke-width="0.9"/><rect x="0.5" y="9.8" width="7.5" height="1" fill="#666"/><path d="M6.8,0.8 L2.6,8.8" stroke="#f6a800" stroke-width="2.2"/><path d="M7,0.6 L6.1,2.3" stroke="#f07000" stroke-width="2.2"/><path d="M2.6,8.8 L2.2,10" stroke="#555" stroke-width="1"/></g>
<g transform="translate(767.5,451.7) scale(1.0)"><path d="M0.5,0.5 H7.5 L9.5,2.5 V10.5 H0.5 Z" fill="#f8fcff" stroke="#7a8090" stroke-width="0.9"/><path d="M7.5,0.5 V2.5 H9.5" fill="none" stroke="#9aa0b0" stroke-width="0.7"/><path d="M1.8,4.3 L7.6,10 M7.6,4.3 L1.8,10" stroke="#ee1a1a" stroke-width="1.8"/></g>
<g transform="translate(615.5,413) scale(1.0)"><defs><linearGradient id="bg1" x1="0" y1="0" x2="0" y2="1"><stop offset="0" stop-color="#78b4f4"/><stop offset="1" stop-color="#d4f4ff"/></linearGradient></defs><ellipse cx="4.8" cy="4" rx="4.8" ry="3.9" fill="url(#bg1)"/><path d="M3,7 L3.5,9 L5,7.5 Z" fill="#b0e0fa"/></g>
<g transform="translate(611.2,453) scale(1.0)"><defs><linearGradient id="bg1" x1="0" y1="0" x2="0" y2="1"><stop offset="0" stop-color="#78b4f4"/><stop offset="1" stop-color="#d4f4ff"/></linearGradient></defs><ellipse cx="4.8" cy="4" rx="4.8" ry="3.9" fill="url(#bg1)"/><path d="M3,7 L3.5,9 L5,7.5 Z" fill="#b0e0fa"/></g>
</svg>
</body></html>
